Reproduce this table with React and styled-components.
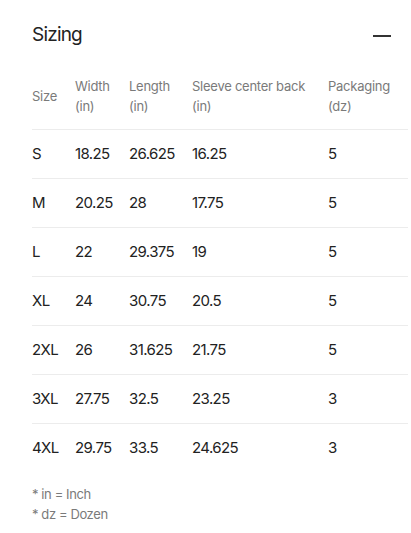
import React from "react";
import styled, { createGlobalStyle } from "styled-components";

const Global = createGlobalStyle`
  html, body { margin: 0; padding: 0; background: #fff; }
  body { font-family: Inter, "Noto Sans", sans-serif; color: #222; }
`;

const Section = styled.section`
  padding: 17px 0 0 32px;
  width: 411px;
  box-sizing: border-box;
`;

const Header = styled.div`
  display: flex;
  align-items: center;
  justify-content: space-between;
  height: 34px;
  padding-right: 20px;
`;

const Title = styled.h2`
  margin: 0;
  font-size: 19px;
  font-weight: 400;
  letter-spacing: -0.8px;
  color: #222;
`;

const Minus = styled.button`
  border: 0;
  background: none;
  padding: 0;
  margin-top: 4px;
  width: 18px;
  height: 18px;
  display: flex;
  align-items: center;
  cursor: pointer;
  &::before {
    content: "";
    display: block;
    width: 18px;
    height: 2px;
    background: #333;
  }
`;

const Table = styled.table`
  margin-top: 25px;
  width: 376px;
  border-collapse: collapse;
  table-layout: fixed;
`;

const Th = styled.th`
  width: ${(p) => p.$w}px;
  text-align: left;
  vertical-align: middle;
  font-weight: 400;
  font-size: 13px;
  line-height: 20px;
  letter-spacing: -0.25px;
  color: #7a7a7a;
  padding: 0 0 13px 0;
  border-bottom: 1px solid #ececec;
`;

const Tr = styled.tr`
  & + & td { border-top: 1px solid #ececec; }
`;

const Td = styled.td`
  height: 46px;
  padding: 0 0 2px 0;
  font-size: 15px;
  letter-spacing: -0.6px;
  color: #222;
  vertical-align: middle;
`;

const Notes = styled.div`
  margin-top: 12px;
  font-size: 13px;
  line-height: 20px;
  letter-spacing: -0.4px;
  color: #7a7a7a;
`;

const cols = [
  { w: 43, label: "Size" },
  { w: 54, label: ["Width", "(in)"] },
  { w: 63, label: ["Length", "(in)"] },
  { w: 136, label: ["Sleeve center back", "(in)"] },
  { w: 80, label: ["Packaging", "(dz)"] },
];

const rows = [
  ["S", "18.25", "26.625", "16.25", "5"],
  ["M", "20.25", "28", "17.75", "5"],
  ["L", "22", "29.375", "19", "5"],
  ["XL", "24", "30.75", "20.5", "5"],
  ["2XL", "26", "31.625", "21.75", "5"],
  ["3XL", "27.75", "32.5", "23.25", "3"],
  ["4XL", "29.75", "33.5", "24.625", "3"],
];

export default function App() {
  return (
    <>
      <Global />
      <Section>
        <Header>
          <Title>Sizing</Title>
          <Minus aria-label="Collapse" />
        </Header>
        <Table>
          <thead>
            <tr>
              {cols.map((c, i) => (
                <Th key={i} $w={c.w}>
                  {Array.isArray(c.label) ? (
                    <>
                      {c.label[0]}
                      <br />
                      {c.label[1]}
                    </>
                  ) : (
                    c.label
                  )}
                </Th>
              ))}
            </tr>
          </thead>
          <tbody>
            {rows.map((r, i) => (
              <Tr key={i}>
                {r.map((v, j) => (
                  <Td key={j}>{v}</Td>
                ))}
              </Tr>
            ))}
          </tbody>
        </Table>
        <Notes>
          * in = Inch
          <br />* dz = Dozen
        </Notes>
      </Section>
    </>
  );
}
